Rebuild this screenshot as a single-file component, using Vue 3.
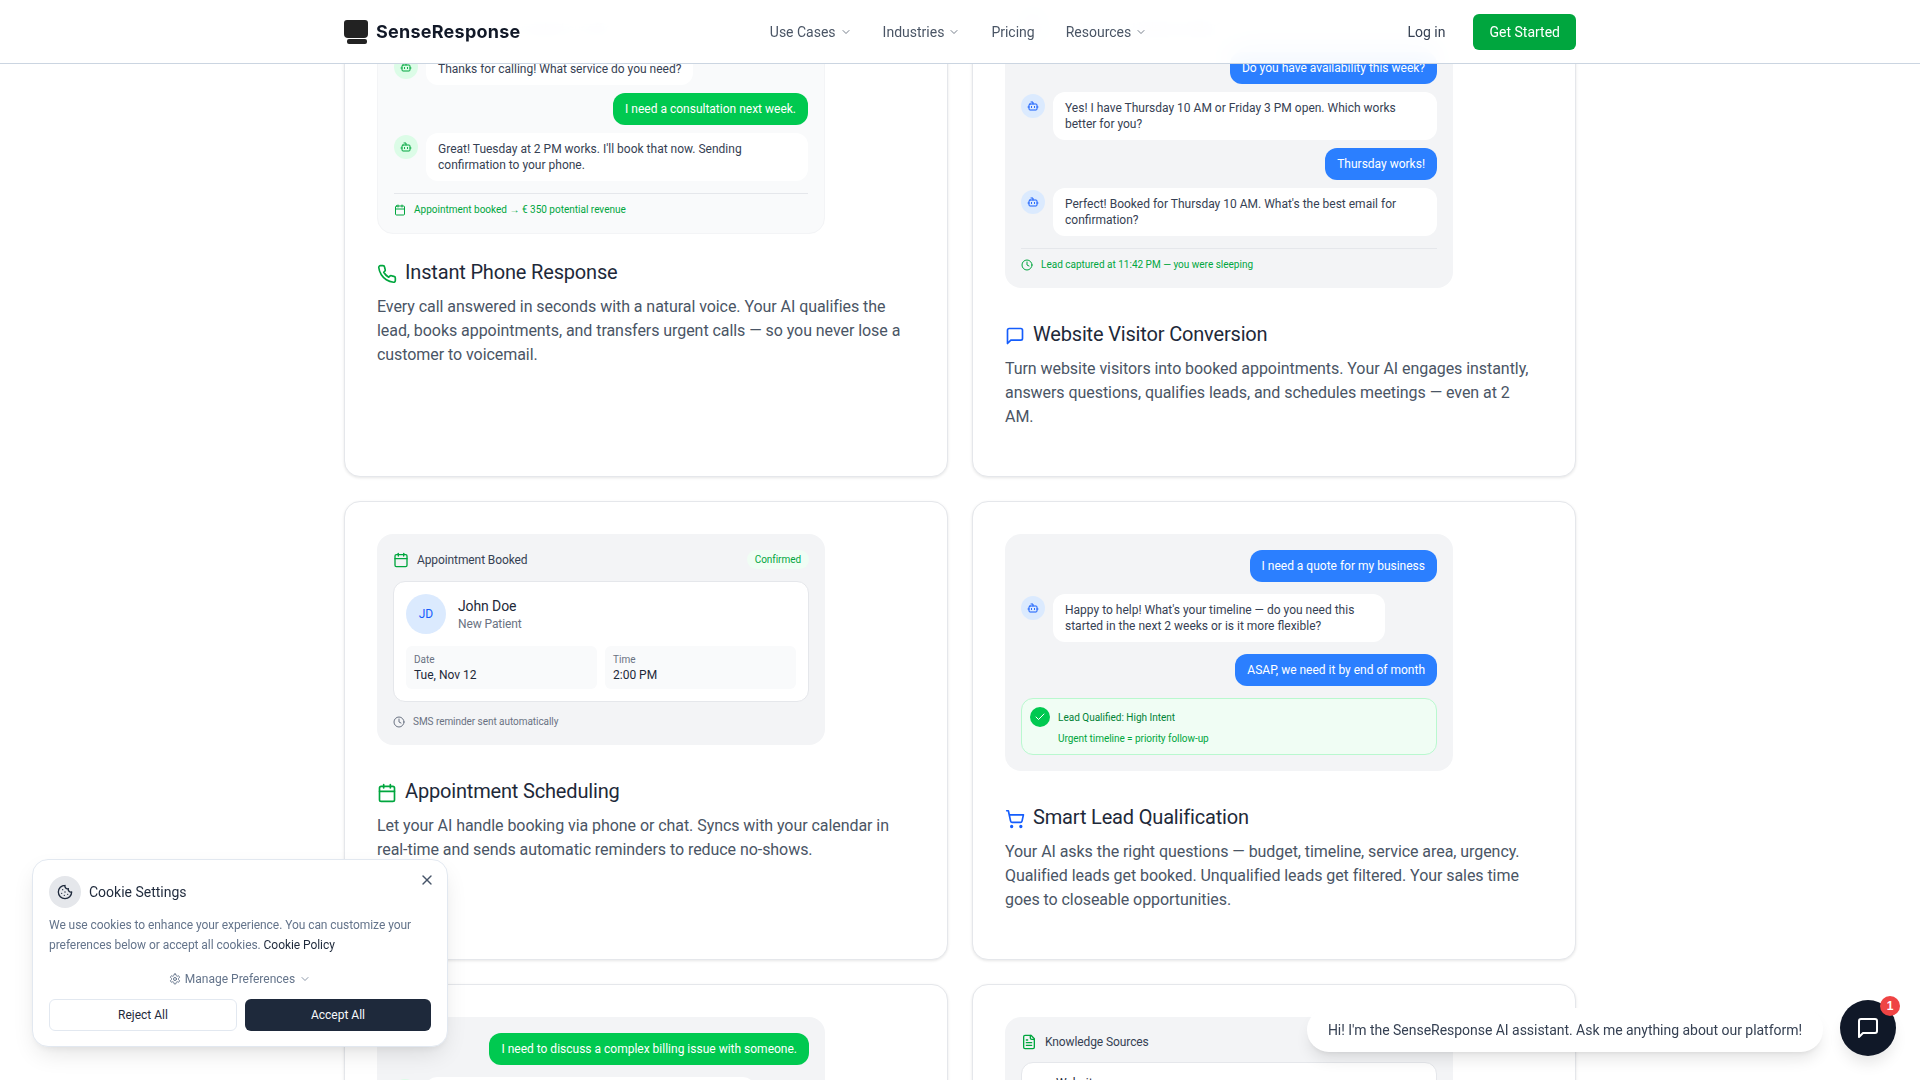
<script setup>
import { h } from 'vue'

const paths = {
  phone: '<path d="M22 16.92v3a2 2 0 0 1-2.18 2 19.79 19.79 0 0 1-8.63-3.07 19.5 19.5 0 0 1-6-6 19.79 19.79 0 0 1-3.07-8.67A2 2 0 0 1 4.11 2h3a2 2 0 0 1 2 1.72c.13.96.36 1.9.7 2.81a2 2 0 0 1-.45 2.11L8.09 9.91a16 16 0 0 0 6 6l1.27-1.27a2 2 0 0 1 2.11-.45c.91.34 1.85.57 2.81.7A2 2 0 0 1 22 16.92z"/>',
  message: '<path d="M21 15a2 2 0 0 1-2 2H7l-4 4V5a2 2 0 0 1 2-2h14a2 2 0 0 1 2 2z"/>',
  calendar: '<path d="M8 2v4"/><path d="M16 2v4"/><rect x="3" y="4" width="18" height="18" rx="2"/><path d="M3 10h18"/>',
  cart: '<circle cx="8" cy="21" r="1"/><circle cx="19" cy="21" r="1"/><path d="M2.05 2.05h2l2.66 12.42a2 2 0 0 0 2 1.58h9.78a2 2 0 0 0 1.95-1.57l1.65-7.43H5.12"/>',
  bot: '<path d="M12 8V4H8"/><rect x="4" y="8" width="16" height="12" rx="2"/><path d="M2 14h2"/><path d="M20 14h2"/><path d="M15 13v2"/><path d="M9 13v2"/>',
  clock: '<circle cx="12" cy="12" r="10"/><path d="M12 6v6l4 2"/>',
  file: '<path d="M15 2H6a2 2 0 0 0-2 2v16a2 2 0 0 0 2 2h12a2 2 0 0 0 2-2V7z"/><path d="M14 2v4a2 2 0 0 0 2 2h4"/><path d="M10 9H8"/><path d="M16 13H8"/><path d="M16 17H8"/>',
  cookie: '<path d="M12 2a10 10 0 1 0 10 10 4 4 0 0 1-5-5 4 4 0 0 1-5-5"/><path d="M8.5 8.5v.01"/><path d="M16 15.5v.01"/><path d="M12 12v.01"/><path d="M11 17v.01"/><path d="M7 14v.01"/>',
  gear: '<path d="M12.22 2h-.44a2 2 0 0 0-2 2v.18a2 2 0 0 1-1 1.73l-.43.25a2 2 0 0 1-2 0l-.15-.08a2 2 0 0 0-2.73.73l-.22.38a2 2 0 0 0 .73 2.73l.15.1a2 2 0 0 1 1 1.72v.51a2 2 0 0 1-1 1.74l-.15.09a2 2 0 0 0-.73 2.73l.22.38a2 2 0 0 0 2.73.73l.15-.08a2 2 0 0 1 2 0l.43.25a2 2 0 0 1 1 1.73V20a2 2 0 0 0 2 2h.44a2 2 0 0 0 2-2v-.18a2 2 0 0 1 1-1.73l.43-.25a2 2 0 0 1 2 0l.15.08a2 2 0 0 0 2.73-.73l.22-.39a2 2 0 0 0-.73-2.73l-.15-.08a2 2 0 0 1-1-1.74v-.5a2 2 0 0 1 1-1.74l.15-.09a2 2 0 0 0 .73-2.73l-.22-.38a2 2 0 0 0-2.73-.73l-.15.08a2 2 0 0 1-2 0l-.43-.25a2 2 0 0 1-1-1.73V4a2 2 0 0 0-2-2z"/><circle cx="12" cy="12" r="3"/>',
  chevron: '<path d="m6 9 6 6 6-6"/>',
  x: '<path d="M18 6 6 18"/><path d="m6 6 12 12"/>',
  check: '<path d="M20 6 9 17l-5-5"/>'
}

const Icon = (props) =>
  h('svg', {
    viewBox: '0 0 24 24',
    fill: 'none',
    stroke: 'currentColor',
    'stroke-width': props.sw || 2,
    'stroke-linecap': 'round',
    'stroke-linejoin': 'round',
    width: props.size || 16,
    height: props.size || 16,
    innerHTML: paths[props.name]
  })
Icon.props = ['name', 'size', 'sw']
</script>

<template>
  <div class="page">
    <header class="topbar">
      <div class="topbar-inner">
        <a class="logo">
          <span class="logo-mark"><span class="logo-screen"></span><span class="logo-base"></span></span>
          <span class="logo-text">SenseResponse</span>
        </a>
        <nav class="nav">
          <span class="nav-item">Use Cases <Icon name="chevron" :size="12" :sw="1.5" /></span>
          <span class="nav-item">Industries <Icon name="chevron" :size="12" :sw="1.5" /></span>
          <span class="nav-item">Pricing</span>
          <span class="nav-item">Resources <Icon name="chevron" :size="12" :sw="1.5" /></span>
        </nav>
        <div class="actions">
          <span class="login">Log in</span>
          <span class="cta">Get Started</span>
        </div>
      </div>
    </header>

    <main class="grid">
      <article class="card">
        <div class="panel panel-light">
          <div class="thread">
            <div class="row">
              <span class="avatar av-green"><Icon name="bot" :size="12" /></span>
              <div class="bubble">Hi there, you've reached our office.</div>
            </div>
            <div class="row">
              <span class="avatar av-green"><Icon name="bot" :size="12" /></span>
              <div class="bubble">Thanks for calling! What service do you need?</div>
            </div>
            <div class="row end"><div class="bubble user-green">I need a consultation next week.</div></div>
            <div class="row">
              <span class="avatar av-green"><Icon name="bot" :size="12" /></span>
              <div class="bubble">Great! Tuesday at 2 PM works. I'll book that now. Sending confirmation to your phone.</div>
            </div>
          </div>
          <div class="panel-foot"><Icon name="calendar" :size="12" /><span>Appointment booked → € 350 potential revenue</span></div>
        </div>
        <h3 class="title title-tight"><Icon class="title-icon green" name="phone" :size="20" />Instant Phone Response</h3>
        <p class="desc">Every call answered in seconds with a natural voice. Your AI qualifies the lead, books appointments, and transfers urgent calls — so you never lose a customer to voicemail.</p>
      </article>

      <article class="card">
        <div class="panel">
          <div class="thread">
            <div class="row">
              <span class="avatar av-blue"><Icon name="bot" :size="12" /></span>
              <div class="bubble">Hi! How can I help you today?</div>
            </div>
            <div class="row end"><div class="bubble user-blue">Do you have availability this week?</div></div>
            <div class="row">
              <span class="avatar av-blue"><Icon name="bot" :size="12" /></span>
              <div class="bubble">Yes! I have Thursday 10 AM or Friday 3 PM open. Which works better for you?</div>
            </div>
            <div class="row end"><div class="bubble user-blue">Thursday works!</div></div>
            <div class="row">
              <span class="avatar av-blue"><Icon name="bot" :size="12" /></span>
              <div class="bubble">Perfect! Booked for Thursday 10 AM. What's the best email for confirmation?</div>
            </div>
          </div>
          <div class="panel-foot"><Icon name="clock" :size="12" /><span>Lead captured at 11:42 PM — you were sleeping</span></div>
        </div>
        <h3 class="title"><Icon class="title-icon blue" name="message" :size="20" />Website Visitor Conversion</h3>
        <p class="desc">Turn website visitors into booked appointments. Your AI engages instantly, answers questions, qualifies leads, and schedules meetings — even at 2 AM.</p>
      </article>

      <article class="card">
        <div class="panel">
          <div class="appt-head">
            <span class="appt-label"><Icon class="green" name="calendar" :size="16" />Appointment Booked</span>
            <span class="badge">Confirmed</span>
          </div>
          <div class="appt-card">
            <div class="patient">
              <span class="initials">JD</span>
              <div>
                <div class="patient-name">John Doe</div>
                <div class="patient-sub">New Patient</div>
              </div>
            </div>
            <div class="slots">
              <div class="slot"><div class="slot-label">Date</div><div class="slot-value">Tue, Nov 12</div></div>
              <div class="slot"><div class="slot-label">Time</div><div class="slot-value">2:00 PM</div></div>
            </div>
          </div>
          <div class="appt-foot"><Icon name="clock" :size="12" /><span>SMS reminder sent automatically</span></div>
        </div>
        <h3 class="title"><Icon class="title-icon green" name="calendar" :size="20" />Appointment Scheduling</h3>
        <p class="desc">Let your AI handle booking via phone or chat. Syncs with your calendar in real-time and sends automatic reminders to reduce no-shows.</p>
      </article>

      <article class="card">
        <div class="panel">
          <div class="thread wide">
            <div class="row end"><div class="bubble user-blue">I need a quote for my business</div></div>
            <div class="row">
              <span class="avatar av-blue"><Icon name="bot" :size="12" /></span>
              <div class="bubble narrow">Happy to help! What's your timeline — do you need this started in the next 2 weeks or is it more flexible?</div>
            </div>
            <div class="row end"><div class="bubble user-blue">ASAP, we need it by end of month</div></div>
            <div class="lead-box">
              <div class="lead-top">
                <span class="lead-check"><Icon name="check" :size="12" /></span>
                <span class="lead-title">Lead Qualified: High Intent</span>
              </div>
              <div class="lead-sub">Urgent timeline = priority follow-up</div>
            </div>
          </div>
        </div>
        <h3 class="title"><Icon class="title-icon blue" name="cart" :size="20" />Smart Lead Qualification</h3>
        <p class="desc">Your AI asks the right questions — budget, timeline, service area, urgency. Qualified leads get booked. Unqualified leads get filtered. Your sales time goes to closeable opportunities.</p>
      </article>

      <article class="card">
        <div class="panel">
          <div class="thread wide">
            <div class="row end"><div class="bubble user-green">I need to discuss a complex billing issue with someone.</div></div>
            <div class="row">
              <span class="avatar av-green"><Icon name="bot" :size="12" /></span>
              <div class="bubble transfer">Of course. Let me connect you with a billing specialist who can help right away.</div>
            </div>
          </div>
        </div>
      </article>

      <article class="card">
        <div class="panel">
          <div class="appt-head know-head">
            <span class="appt-label"><Icon class="green" name="file" :size="16" />Knowledge Sources</span>
          </div>
          <div class="source-card"><div class="source-name">Website</div></div>
        </div>
      </article>
    </main>

    <aside class="cookie">
      <button class="cookie-close"><Icon name="x" :size="16" /></button>
      <div class="cookie-head">
        <span class="cookie-icon"><Icon name="cookie" :size="16" /></span>
        <span class="cookie-title">Cookie Settings</span>
      </div>
      <p class="cookie-text">We use cookies to enhance your experience. You can customize your preferences below or accept all cookies. <a class="cookie-link">Cookie Policy</a></p>
      <div class="cookie-manage"><Icon name="gear" :size="12" />Manage Preferences <Icon name="chevron" :size="12" :sw="1.5" /></div>
      <div class="cookie-btns">
        <button class="btn-reject">Reject All</button>
        <button class="btn-accept">Accept All</button>
      </div>
    </aside>

    <div class="chat-tip">Hi! I'm the SenseResponse AI assistant. Ask me anything about our platform!</div>
    <button class="chat-btn">
      <Icon name="message" :size="24" />
      <span class="chat-badge">1</span>
    </button>
  </div>
</template>

<style scoped>
.page {
  height: 100vh;
  overflow: hidden;
  background: #fff;
  font-family: Roboto, "Liberation Sans", sans-serif;
  color: #1e2939;
}
.topbar {
  position: fixed;
  top: 0;
  left: 0;
  right: 0;
  z-index: 20;
  height: 64px;
  box-sizing: border-box;
  background: rgba(255, 255, 255, 0.95);
  backdrop-filter: blur(12px);
  border-bottom: 1px solid #cbd5e1;
}
.topbar-inner {
  width: 1232px;
  height: 63px;
  margin: 0 auto;
  display: flex;
  align-items: center;
  justify-content: space-between;
}
.logo { display: flex; align-items: center; gap: 8px; }
.logo-mark { width: 24px; height: 24px; display: flex; flex-direction: column; align-items: flex-end; }
.logo-screen { width: 24px; height: 18px; background: #222; border-radius: 3px 3px 4px 4px; }
.logo-base { width: 20px; height: 5px; margin: 1px 1px 0 0; background: #222; border-radius: 2px; }
.logo-text { font-family: Inter, sans-serif; font-size: 18px; font-weight: 700; color: #111827; letter-spacing: 0.25px; }
.nav { display: flex; align-items: center; gap: 31px; margin-right: 11px; }
.nav-item { display: flex; align-items: center; gap: 4px; font-size: 14px; color: #4a5565; }
.actions { display: flex; align-items: center; gap: 28px; }
.login { font-size: 14px; color: #364153; }
.cta {
  height: 36px;
  padding: 0 16px;
  display: flex;
  align-items: center;
  font-size: 14px;
  color: #fff;
  background: #00a63e;
  border-radius: 6px;
}

.grid {
  width: 1232px;
  margin: -37px auto 0;
  display: grid;
  grid-template-columns: 1fr 1fr;
  gap: 24px;
}
.card {
  box-sizing: border-box;
  padding: 32px 32px 47px;
  background: #fff;
  border: 1px solid #e5e7eb;
  border-radius: 16px;
  box-shadow: 0 1px 3px rgba(0, 0, 0, 0.1);
}
.panel {
  width: 448px;
  box-sizing: border-box;
  padding: 16px;
  background: #f3f4f6;
  border-radius: 16px;
}
.panel-light { background: #f9fafb; border: 1px solid #f3f4f6; }
.thread { display: flex; flex-direction: column; gap: 8px; }
.thread.wide { gap: 12px; }
.row { display: flex; gap: 8px; align-items: flex-start; }
.row.end { justify-content: flex-end; }
.avatar {
  flex: none;
  width: 24px;
  height: 24px;
  margin-top: 2px;
  border-radius: 50%;
  display: flex;
  align-items: center;
  justify-content: center;
}
.av-green { background: #dcfce7; color: #00a63e; }
.av-blue { background: #dbeafe; color: #155dfc; }
.bubble {
  box-sizing: border-box;
  padding: 8px 12px;
  font-size: 12px;
  line-height: 16px;
  color: #364153;
  background: #fff;
  border-radius: 12px;
}
.bubble.narrow { width: 332px; }
.bubble.transfer { width: 330px; }
.user-green { background: #00c950; color: #fff; }
.user-blue { background: #2b7fff; color: #fff; }
.panel-foot {
  margin-top: 12px;
  padding-top: 8px;
  border-top: 1px solid #e5e7eb;
  display: flex;
  align-items: center;
  gap: 8px;
  font-size: 10px;
  line-height: 15px;
  color: #00a63e;
}
.title {
  margin: 32px 0 9px;
  display: flex;
  align-items: center;
  gap: 8px;
  font-size: 20px;
  line-height: 28px;
  font-weight: 400;
  letter-spacing: -0.17px;
  color: #1e2939;
}
.title-tight { margin-top: 24px; }
.title-icon { margin-top: 4px; flex: none; }
.green { color: #00a63e; }
.blue { color: #155dfc; }
.desc {
  margin: 0;
  max-width: 534px;
  font-size: 16px;
  line-height: 24px;
  letter-spacing: -0.06px;
  color: #4a5565;
}

.appt-head { display: flex; align-items: center; justify-content: space-between; margin-bottom: 12px; min-height: 19px; }
.know-head { min-height: 17px; }
.appt-label { display: flex; align-items: center; gap: 8px; font-size: 12px; letter-spacing: -0.1px; color: #364153; }
.badge {
  padding: 2px 8px;
  font-size: 10px;
  line-height: 15px;
  letter-spacing: -0.05px;
  color: #00a63e;
  background: #f0fdf4;
  border-radius: 999px;
}
.appt-card {
  padding: 12px;
  background: #fff;
  border: 1px solid #e5e7eb;
  border-radius: 12px;
}
.patient { display: flex; align-items: center; gap: 12px; margin-bottom: 12px; }
.initials {
  width: 40px;
  height: 40px;
  border-radius: 50%;
  background: #dbeafe;
  color: #155dfc;
  font-size: 12px;
  display: flex;
  align-items: center;
  justify-content: center;
}
.patient-name { font-size: 14px; line-height: 20px; letter-spacing: -0.1px; color: #1e2939; }
.patient-sub { font-size: 12px; line-height: 16px; letter-spacing: -0.1px; color: #6a7282; }
.slots { display: grid; grid-template-columns: 1fr 1fr; gap: 8px; }
.slot { padding: 6px 8px; background: #f9fafb; border-radius: 6px; }
.slot-label { font-size: 10px; line-height: 15px; color: #6a7282; }
.slot-value { font-size: 12px; line-height: 16px; color: #1e2939; }
.appt-foot {
  margin-top: 12px;
  display: flex;
  align-items: center;
  gap: 8px;
  font-size: 10px;
  line-height: 15px;
  letter-spacing: -0.05px;
  color: #6a7282;
}

.lead-box {
  padding: 8px;
  background: #f0fdf4;
  border: 1px solid #b9f8cf;
  border-radius: 12px;
}
.lead-top { display: flex; align-items: center; gap: 8px; }
.lead-check {
  width: 20px;
  height: 20px;
  border-radius: 50%;
  background: #00c950;
  color: #fff;
  display: flex;
  align-items: center;
  justify-content: center;
}
.lead-title { font-size: 10px; line-height: 15px; color: #008236; }
.lead-sub { margin: 4px 0 0 28px; font-size: 10px; line-height: 15px; letter-spacing: -0.05px; color: #00a63e; }

.source-card {
  padding: 12px 12px 12px 34px;
  background: #fff;
  border: 1px solid #e5e7eb;
  border-radius: 12px;
}
.source-name { font-size: 12px; line-height: 16px; color: #1e2939; }

.cookie {
  position: fixed;
  left: 32px;
  bottom: 33px;
  z-index: 30;
  width: 416px;
  box-sizing: border-box;
  padding: 16px 16px 15px;
  background: #fff;
  border: 1px solid #e2e8f0;
  border-radius: 16px;
  box-shadow: 0 10px 25px -5px rgba(0, 0, 0, 0.12), 0 4px 10px -4px rgba(0, 0, 0, 0.08);
}
.cookie-close {
  position: absolute;
  top: 12px;
  right: 12px;
  padding: 0;
  border: 0;
  background: none;
  color: #475569;
  display: flex;
}
.cookie-head { display: flex; align-items: center; gap: 8px; }
.cookie-icon {
  width: 32px;
  height: 32px;
  border-radius: 50%;
  background: #e5e7eb;
  color: #1e293b;
  display: flex;
  align-items: center;
  justify-content: center;
}
.cookie-title { font-size: 14px; color: #1e293b; }
.cookie-text { margin: 7px 0 0; font-size: 12px; line-height: 20px; letter-spacing: -0.06px; color: #64748b; }
.cookie-link { color: #1e293b; }
.cookie-manage {
  margin-top: 16px;
  height: 16px;
  display: flex;
  align-items: center;
  justify-content: center;
  gap: 4px;
  font-size: 12px;
  color: #64748b;
}
.cookie-btns { margin-top: 12px; display: flex; gap: 8px; }
.cookie-btns button {
  flex: 1;
  height: 32px;
  font-family: inherit;
  font-size: 12px;
  border-radius: 6px;
}
.btn-reject { background: #fff; border: 1px solid #e2e8f0; color: #1e293b; }
.btn-accept { background: #1e293b; border: 0; color: #f8fafc; }

.chat-tip {
  position: fixed;
  right: 97px;
  bottom: 28px;
  z-index: 25;
  height: 44px;
  padding: 0 21px;
  display: flex;
  align-items: center;
  font-size: 14px;
  letter-spacing: -0.03px;
  color: #364153;
  background: #fff;
  border-radius: 22px;
  box-shadow: 0 10px 15px -3px rgba(0, 0, 0, 0.1), 0 4px 6px -4px rgba(0, 0, 0, 0.1);
}
.chat-btn {
  position: fixed;
  right: 24px;
  bottom: 24px;
  z-index: 25;
  width: 56px;
  height: 56px;
  padding: 0;
  border: 0;
  border-radius: 50%;
  background: #101828;
  color: #fff;
  display: flex;
  align-items: center;
  justify-content: center;
  box-shadow: 0 10px 15px -3px rgba(0, 0, 0, 0.1);
}
.chat-badge {
  position: absolute;
  top: -4px;
  right: -4px;
  width: 20px;
  height: 20px;
  border-radius: 50%;
  background: #ef4444;
  color: #fff;
  font-size: 12px;
  font-weight: 700;
  display: flex;
  align-items: center;
  justify-content: center;
}
</style>

<style>
html, body { margin: 0; overflow: hidden; }
</style>
